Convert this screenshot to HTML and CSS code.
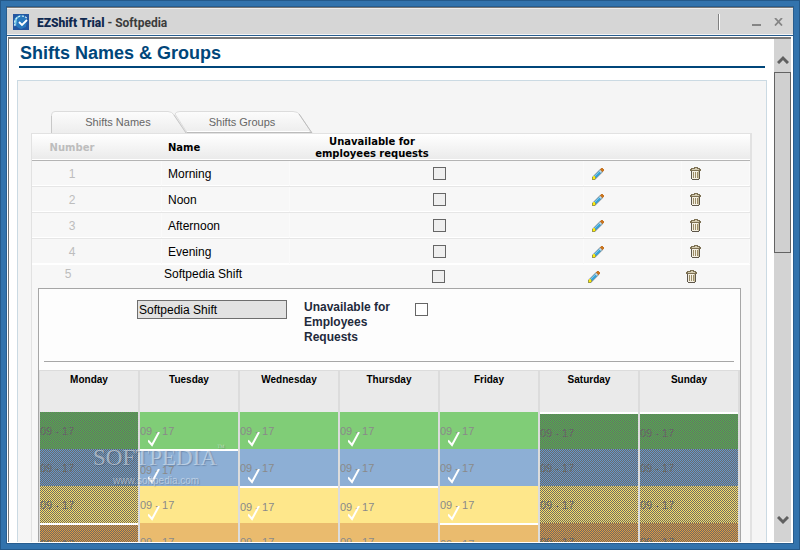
FILE: index.html
```html
<!DOCTYPE html>
<html lang="en">
<head>
    <meta charset="utf-8">
    <title>EZShift Trial - Softpedia</title>
    <link rel="stylesheet" href="styles.css">
</head>
<body>
    <!-- Shared icons -->
    <svg class="sprite" aria-hidden="true">
        <symbol id="pencil" viewBox="0 0 12 12">
            <path d="M1.5 10.5L10 2" stroke="#8b8f92" stroke-width="4"/>
            <path d="M2.5 9.5L9 3" stroke="#35a3d8" stroke-width="3"/>
            <path d="M2.8 8L8 2.8" stroke="#8fd0ee" stroke-width="1"/>
            <path d="M7.6 2.6L9.4 4.4" stroke="#d8d8d8" stroke-width="1.4"/>
            <path d="M9 0h2v1h1v2h-1v1h-1v-1h-1v-1h-1v-1h1z" fill="#c87522"/>
            <path d="M0 9h1v-1h2v1h1v2h-1v1h-3z" fill="#9c9b4a"/>
            <path d="M1 9h1v1h1v1h-2z" fill="#fff000"/>
            <path d="M1 8h2v2h-2z" fill="#f4e51c"/>
        </symbol>
        <symbol id="trash" viewBox="0 0 11 13">
            <path d="M4 0h4v1h2v1h1v2h-11v-2h1v-1h3z" fill="#7d7154"/>
            <path d="M5 1h2v1h-2zM2 2h7v1h-7z" fill="#d5ccb0"/>
            <path d="M1 4h9v8h-1v1h-7v-1h-1z" fill="#5d564a"/>
            <path d="M2 4h7v8h-7z" fill="#f4efe2"/>
            <path d="M3 5h1v6h-1zM5 5h1v6h-1zM7 5h1v6h-1z" fill="#9b8d68"/>
            <path d="M8 4h1v8h-1z" fill="#c9bd9a"/>
        </symbol>
        <symbol id="tick" viewBox="0 0 12 15">
            <path d="M0 8.500L4 13L11 0" fill="none" stroke="#fff" stroke-width="2"/>
        </symbol>
    </svg>

    <div class="window">
        <div class="title-bar">
            <svg class="app-icon" viewBox="0 0 16 16">
                <rect width="16" height="16" fill="#2456a0"/>
                <path d="M1 5Q5 0 11 1L14 5L13 13L8 15Q1 13 1 5" fill="#2878bd"/>
                <path d="M1 9Q2 2 8 1L4 5L3 12z" fill="#73c8e8"/>
                <path d="M2 12Q0 4 8 2Q13 2 14 5" fill="none" stroke="#d9f2fb" stroke-width="1.200" stroke-dasharray="2 1.500"/>
                <path d="M6 8L9 11L14 6" fill="none" stroke="#fff" stroke-width="1.800"/>
            </svg>
            <div class="app-title"><b>EZShift Trial</b> - Softpedia</div>
            <div class="window-buttons">
                <button type="button" aria-label="Minimize"><svg width="9" height="9"><path d="M0 7h9v2h-9z" fill="#858585"/></svg></button>
                <button type="button" aria-label="Close"><svg width="9" height="8"><path d="M1 0L8 7.500M8 0L1 7.500" stroke="#858585" stroke-width="1.800"/></svg></button>
            </div>
        </div>

        <div class="content">
            <main class="page">
                <h1>Shifts Names &amp; Groups</h1>
                <div class="panel">
                    <div class="tabs">
                        <svg class="tab-shape" width="262" height="22">
                            <defs>
                                <linearGradient id="tabFill" x2="0" y2="1">
                                    <stop offset="0" stop-color="#fcfcfc"/>
                                    <stop offset="1" stop-color="#ededed"/>
                                </linearGradient>
                            </defs>
                            <path d="M124 3Q125 .5 129 .5H242Q247 .5 249 4L260.500 21.500H136z" fill="url(#tabFill)" stroke="#dcdcdc"/>
                            <path d="M136 20.500H258" stroke="#fff"/>
                            <path d="M134 21.500H261M248 3L261 22" stroke="#bcbcbc" fill="none"/>
                            <path d="M.5 22V4Q.5 .5 4 .5H117Q121 .5 123 4L135.500 22" fill="url(#tabFill)" stroke="#dcdcdc"/>
                            <path d="M.5 5V22M123 4L135 22" stroke="#c8c8c8" fill="none"/>
                        </svg>
                        <button type="button" class="tab">Shifts Names</button>
                        <button type="button" class="tab">Shifts Groups</button>
                    </div>

                    <div class="shifts">
                        <table class="shift-table">
                            <colgroup>
                                <col class="col-number">
                                <col class="col-name">
                                <col>
                                <col class="col-edit">
                                <col class="col-delete">
                            </colgroup>
                            <thead>
                                <tr>
                                    <th class="number">Number</th>
                                    <th class="name">Name</th>
                                    <th class="unavailable">Unavailable for employees requests</th>
                                    <th></th>
                                    <th></th>
                                </tr>
                            </thead>
                            <tbody>
                                <tr>
                                    <td class="number">1</td>
                                    <td class="name">Morning</td>
                                    <td class="check"><input type="checkbox" aria-label="Morning unavailable" disabled></td>
                                    <td class="action"><button type="button" aria-label="Edit"><svg width="12" height="12"><use href="#pencil"/></svg></button></td>
                                    <td class="action"><button type="button" aria-label="Delete"><svg width="11" height="13"><use href="#trash"/></svg></button></td>
                                </tr>
                                <tr>
                                    <td class="number">2</td>
                                    <td class="name">Noon</td>
                                    <td class="check"><input type="checkbox" aria-label="Noon unavailable" disabled></td>
                                    <td class="action"><button type="button" aria-label="Edit"><svg width="12" height="12"><use href="#pencil"/></svg></button></td>
                                    <td class="action"><button type="button" aria-label="Delete"><svg width="11" height="13"><use href="#trash"/></svg></button></td>
                                </tr>
                                <tr>
                                    <td class="number">3</td>
                                    <td class="name">Afternoon</td>
                                    <td class="check"><input type="checkbox" aria-label="Afternoon unavailable" disabled></td>
                                    <td class="action"><button type="button" aria-label="Edit"><svg width="12" height="12"><use href="#pencil"/></svg></button></td>
                                    <td class="action"><button type="button" aria-label="Delete"><svg width="11" height="13"><use href="#trash"/></svg></button></td>
                                </tr>
                                <tr class="last">
                                    <td class="number">4</td>
                                    <td class="name">Evening</td>
                                    <td class="check"><input type="checkbox" aria-label="Evening unavailable" disabled></td>
                                    <td class="action"><button type="button" aria-label="Edit"><svg width="12" height="12"><use href="#pencil"/></svg></button></td>
                                    <td class="action"><button type="button" aria-label="Delete"><svg width="11" height="13"><use href="#trash"/></svg></button></td>
                                </tr>
                                <tr class="editing">
                                    <td class="number">5</td>
                                    <td class="name">Softpedia Shift</td>
                                    <td class="check"><input type="checkbox" aria-label="Softpedia Shift unavailable" disabled></td>
                                    <td class="action"><button type="button" aria-label="Edit"><svg width="12" height="12"><use href="#pencil"/></svg></button></td>
                                    <td class="action"><button type="button" aria-label="Delete"><svg width="11" height="13"><use href="#trash"/></svg></button></td>
                                </tr>
                            </tbody>
                        </table>

                        <div class="editor">
                            <form class="editor-form">
                                <input type="text" class="shift-name" aria-label="Shift name" value="Softpedia Shift">
                                <label for="unavailable">Unavailable for Employees Requests</label>
                                <input type="checkbox" id="unavailable">
                            </form>
                            <div class="week">
                                <div class="day off">
                                    <h2>Monday</h2>
                                    <div class="slot green">09 - 17</div>
                                    <div class="slot blue">09 - 17</div>
                                    <div class="slot yellow">09 - 17</div>
                                    <div class="slot orange gap">09 - 17</div>
                                </div>
                                <div class="day">
                                    <h2>Tuesday</h2>
                                    <div class="slot green">09 - 17<svg class="tick"><use href="#tick"/></svg></div>
                                    <div class="slot blue gap">09 - 17<svg class="tick"><use href="#tick"/></svg></div>
                                    <div class="slot yellow">09 - 17<svg class="tick"><use href="#tick"/></svg></div>
                                    <div class="slot orange">09 - 17<svg class="tick"><use href="#tick"/></svg></div>
                                </div>
                                <div class="day">
                                    <h2>Wednesday</h2>
                                    <div class="slot green">09 - 17<svg class="tick"><use href="#tick"/></svg></div>
                                    <div class="slot blue">09 - 17<svg class="tick"><use href="#tick"/></svg></div>
                                    <div class="slot yellow gap">09 - 17<svg class="tick"><use href="#tick"/></svg></div>
                                    <div class="slot orange">09 - 17<svg class="tick"><use href="#tick"/></svg></div>
                                </div>
                                <div class="day">
                                    <h2>Thursday</h2>
                                    <div class="slot green">09 - 17<svg class="tick"><use href="#tick"/></svg></div>
                                    <div class="slot blue">09 - 17<svg class="tick"><use href="#tick"/></svg></div>
                                    <div class="slot yellow gap">09 - 17<svg class="tick"><use href="#tick"/></svg></div>
                                    <div class="slot orange">09 - 17<svg class="tick"><use href="#tick"/></svg></div>
                                </div>
                                <div class="day">
                                    <h2>Friday</h2>
                                    <div class="slot green">09 - 17<svg class="tick"><use href="#tick"/></svg></div>
                                    <div class="slot blue">09 - 17<svg class="tick"><use href="#tick"/></svg></div>
                                    <div class="slot yellow">09 - 17<svg class="tick"><use href="#tick"/></svg></div>
                                    <div class="slot orange gap">09 - 17<svg class="tick"><use href="#tick"/></svg></div>
                                </div>
                                <div class="day off">
                                    <h2>Saturday</h2>
                                    <div class="slot green gap">09 - 17</div>
                                    <div class="slot blue">09 - 17</div>
                                    <div class="slot yellow">09 - 17</div>
                                    <div class="slot orange">09 - 17</div>
                                </div>
                                <div class="day off">
                                    <h2>Sunday</h2>
                                    <div class="slot green gap">09 - 17</div>
                                    <div class="slot blue">09 - 17</div>
                                    <div class="slot yellow">09 - 17</div>
                                    <div class="slot orange">09 - 17</div>
                                </div>
                                <div class="watermark">SOFTPEDIA<sup>™</sup><small>www.softpedia.com</small></div>
                            </div>
                        </div>
                    </div>
                </div>
            </main>
            <div class="scrollbar">
                <svg class="arrow" width="12" height="9"><path d="M1 8L6 3L11 8" fill="none" stroke="#606060" stroke-width="3"/></svg>
                <div class="thumb"></div>
                <svg class="arrow down" width="12" height="9"><path d="M1 1L6 6L11 1" fill="none" stroke="#606060" stroke-width="3"/></svg>
            </div>
        </div>
    </div>
</body>
</html>
```
FILE: styles.css
```css
* {
    box-sizing: border-box;
}
body {
    margin: 0;
    overflow: hidden;
    font-family: "Liberation Sans", Arial, sans-serif;
    font-size: 12px;
    color: #000;
}
button {
    margin: 0;
    padding: 0;
    border: none;
    background: none;
    font-family: inherit;
}
svg {
    display: block;
}
.sprite {
    position: absolute;
    width: 0;
    height: 0;
}

/* Window frame */
.window {
    height: 100vh;
    display: flex;
    flex-direction: column;
    border: 1px solid #24598a;
    padding: 6px;
    background: #3273ad;
}
.title-bar {
    flex: none;
    display: flex;
    align-items: center;
    height: 29px;
    padding: 0 10px 0 6px;
    background: #d6d6d6;
    border-top: 1px solid #777;
    border-bottom: 1px solid #444;
    box-shadow: inset 0 1px #eee, inset 0 -1px #f4f4f4, 0 0 0 1px #285d8e;
}
.app-icon {
    width: 16px;
    height: 16px;
}
.app-title {
    flex: 1;
    margin-left: 8px;
    padding-top: 3px;
    font-family: Roboto, "Liberation Sans", sans-serif;
    font-weight: bold;
    color: #3c3c3c;
}
.app-title b {
    color: #10294f;
}
.window-buttons {
    display: flex;
    align-items: center;
    gap: 13px;
    height: 16px;
    padding-left: 33px;
    border-left: 1px solid #808080;
    box-shadow: inset 1px 0 #fff;
}
.content {
    flex: 1;
    min-height: 0;
    display: flex;
    border: 1px solid #fff;
    outline: 1px solid #285d8e;
    background: #fff;
}
.page {
    flex: 1;
    min-width: 0;
    overflow: hidden;
    padding: 0 7px 0 10px;
    border-top: 2px solid #777;
    border-left: 1px solid #777;
}
h1 {
    margin: 0 2px 12px 0;
    padding: 4px 1px 3px;
    border-bottom: 2px solid #00467a;
    font-size: 18px;
    line-height: 20px;
    color: #00467a;
}
.panel {
    margin-left: -2px;
    padding: 30px 14px 0 13px;
    border: 1px solid #cbdae3;
    background: #f5f5f5;
}

/* Tabs */
.tabs {
    position: relative;
    display: flex;
    width: 262px;
    height: 22px;
    margin-left: 20px;
}
.tab-shape {
    position: absolute;
    top: 0;
    left: 0;
}
.tab {
    position: relative;
    width: 124px;
    padding-left: 10px;
    font-size: 11px;
    color: #666;
}

/* Shift list */
.shifts {
    border: 1px solid #e2e2e2;
    border-right: 2px solid #e2e2e2;
    background: #f7f7f7;
}
.shift-table {
    width: 100%;
    table-layout: fixed;
    border-collapse: separate;
    border-spacing: 0;
}
.col-number {
    width: 130px;
}
.col-name {
    width: 128px;
}
.col-edit {
    width: 98px;
}
.col-delete {
    width: 68px;
}
th {
    height: 27px;
    padding: 0;
    box-shadow: inset 0 -1px #b4b4b4, inset 0 -2px #fff;
    background: linear-gradient(#fff, #e9e9e9);
    font-family: "DejaVu Sans", Verdana, sans-serif;
    font-size: 10px;
    line-height: 12px;
}
td {
    height: 26px;
    padding: 0;
    border-bottom: 1px solid #e6e6e6;
    box-shadow: inset -1px 0 #fafafa, inset 0 -1px #fff;
}
.number {
    padding-right: 50px;
    text-align: center;
    color: #bdbdbd;
}
.name {
    padding-left: 6px;
    text-align: left;
}
.unavailable {
    padding-left: 20px;
    padding-right: 150px;
}
.check {
    padding-left: 5px;
    text-align: center;
}
.action {
    padding-left: 8px;
}
.action button {
    display: block;
}
.last td {
    border-bottom-color: #fff;
}
.editing td {
    height: 23px;
    border: none;
    box-shadow: none;
}
.editing .number {
    padding-right: 58px;
    padding-bottom: 5px;
}
.editing .name {
    padding-left: 2px;
    padding-bottom: 5px;
}
.editing .check {
    padding-left: 3px;
}
.editing .action {
    padding-left: 4px;
}
input[type="checkbox"] {
    appearance: none;
    display: block;
    width: 13px;
    height: 13px;
    margin: 0;
    border: 1px solid #666;
    background: #fff;
}
.check input[type="checkbox"] {
    margin: 0 auto;
}
input[type="checkbox"]:disabled {
    background: #efefef;
}

/* Shift editor */
.editor {
    margin: 0 9px 0 6px;
    border: 1px solid #a6a6a6;
    background: #fdfdfd;
}
.editor-form {
    display: flex;
    align-items: flex-start;
    margin: 0 6px 8px 5px;
    padding: 11px 0 0 93px;
    height: 73px;
    border-bottom: 1px solid #a6a6a6;
}
.shift-name {
    width: 150px;
    height: 19px;
    padding: 0 1px;
    border: 1px solid #6e6e6e;
    background: #e2e2e2;
    font: 12px "Liberation Sans", Arial, sans-serif;
}
.editor-form label {
    width: 111px;
    padding-right: 20px;
    margin-left: 17px;
    font-weight: bold;
    line-height: 15px;
    color: #1f2a3c;
}
.editor-form input[type="checkbox"] {
    margin-top: 3px;
}
.week {
    position: relative;
    display: flex;
    gap: 2px;
    padding: 1px 2px 1px 1px;
    background: #dcdcdc;
}
.day {
    flex: 1;
}
.day h2 {
    height: 41px;
    margin: 0;
    padding-top: 3px;
    background: #eaeaea;
    font-size: 10px;
    line-height: 12px;
    text-align: center;
}
.slot {
    position: relative;
    height: 37px;
    padding-top: 13px;
    font-size: 11px;
    line-height: 13px;
    color: #8a8a8a;
}
.slot.gap {
    border-top: 2px solid #fff;
}
.green {
    background-color: #80cd77;
}
.blue {
    background-color: #8dafd5;
}
.yellow {
    background-color: #fee78b;
}
.orange {
    background-color: #eabb6e;
}
/* Days off get a one pixel checkerboard */
.off .slot {
    background-image: repeating-conic-gradient(#6a6a6a 0 25%, transparent 0 50%);
    background-size: 2px 2px;
    background-position: 1px 0;
    color: #666;
}
.off .green {
    background-color: #4cb748;
}
.off .blue {
    background-color: #6496cb;
}
.off .yellow {
    background-color: #fedf60;
}
.off .orange {
    background-color: #e2993b;
}
.tick {
    position: absolute;
    left: 8px;
    bottom: 2px;
    width: 12px;
    height: 15px;
}
.watermark {
    position: absolute;
    top: 74px;
    left: 54px;
    font-family: "Liberation Serif", serif;
    font-size: 23px;
    line-height: 27px;
    color: rgba(255, 255, 255, 0.45);
    text-shadow: 1px 1px 1px rgba(40, 60, 90, 0.3);
}
.watermark sup {
    font-size: 8px;
    line-height: 8px;
    vertical-align: top;
}
.watermark small {
    display: block;
    padding-left: 20px;
    font-family: "Liberation Sans", Arial, sans-serif;
    font-size: 10px;
    line-height: 20px;
}

/* Scrollbar */
.scrollbar {
    display: flex;
    flex-direction: column;
    align-items: center;
    width: 17px;
    margin-right: 1px;
    border-top: 2px solid #777;
    background: #d3d3d3;
}
.arrow {
    flex: none;
    margin: 16px 0 8px;
}
.arrow.down {
    margin: auto 0 17px;
}
.thumb {
    width: 100%;
    height: 36%;
    border: 1px solid #636363;
    background: #d0d0d0;
}
```
